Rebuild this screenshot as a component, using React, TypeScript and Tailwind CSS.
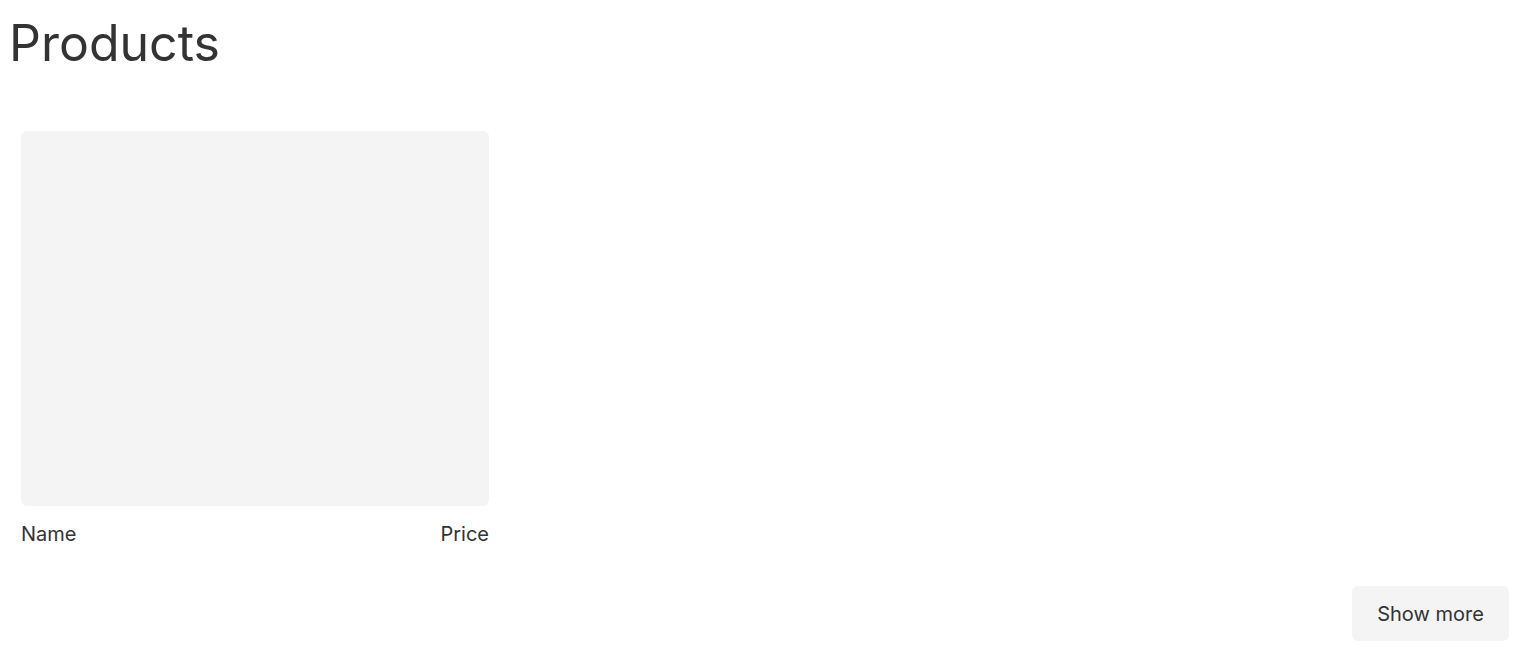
export default function App() {
  const products = [{ name: "Name", price: "Price" }];

  return (
    <div className="min-h-screen bg-white font-['Inter',sans-serif] text-[#333333]">
      <h1 className="pl-[9px] pt-[13px] text-[50px] font-normal leading-[60px]">Products</h1>

      <div className="mt-[58px] grid grid-cols-3 gap-[42px] pl-[21px] pr-[13px]">
        {products.map((p, i) => (
          <div key={i} className="flex flex-col">
            <div className="h-[375px] rounded-md bg-[#f4f4f4]" />
            <div className="mt-[16px] flex justify-between text-[20px] leading-[24px]">
              <span>{p.name}</span>
              <span>{p.price}</span>
            </div>
          </div>
        ))}
      </div>

      <div className="mt-[40px] flex justify-end pr-[13px]">
        <button className="h-[55px] w-[157px] rounded-md bg-[#f4f4f4] pt-[1px] text-[20px] text-[#333333]">
          Show more
        </button>
      </div>
    </div>
  );
}
